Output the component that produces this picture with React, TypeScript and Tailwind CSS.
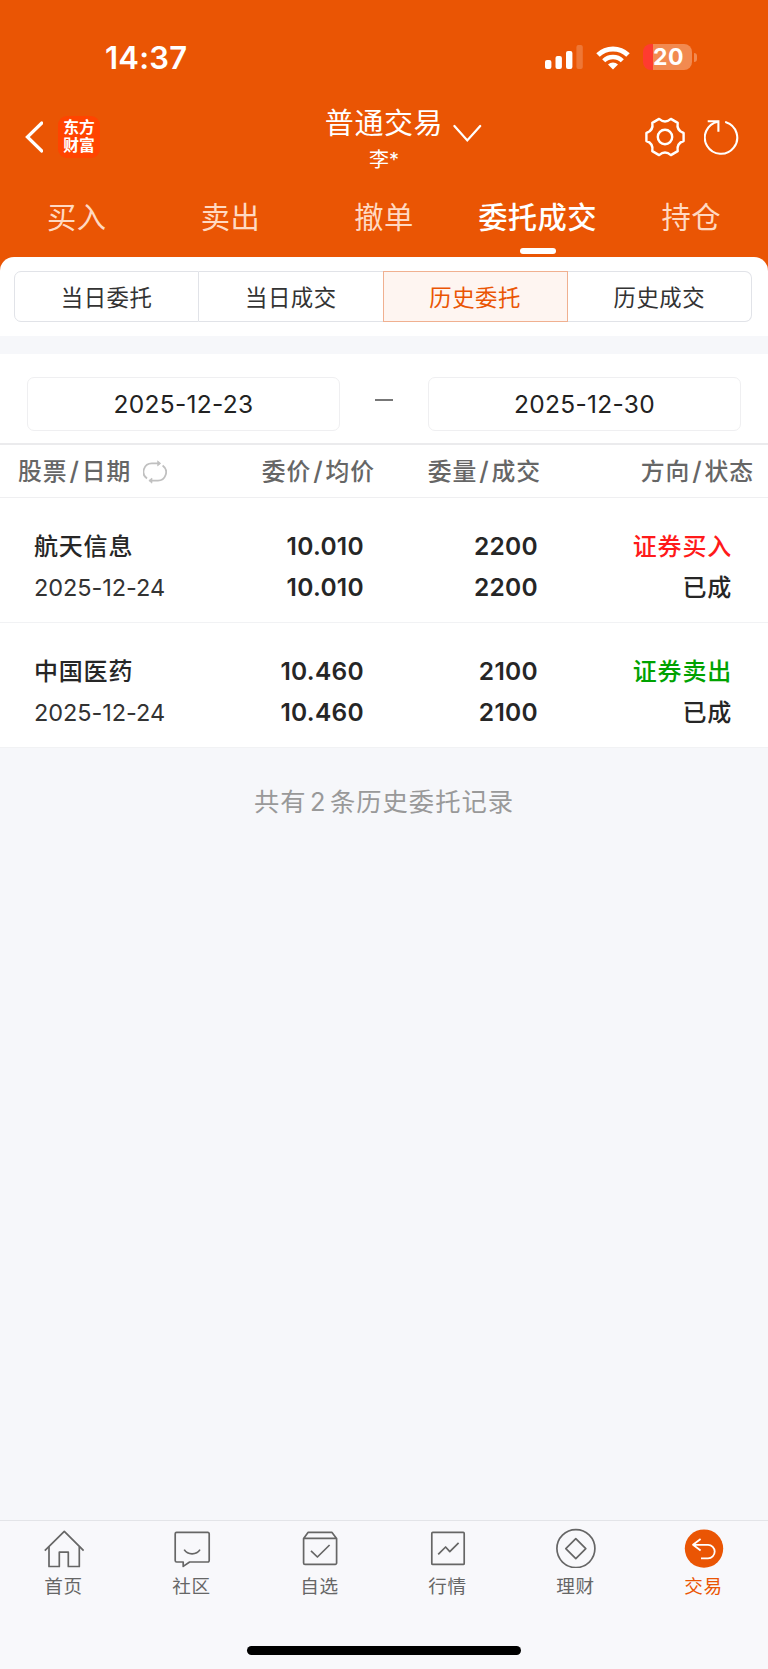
import clsx from 'clsx'
import type { ReactNode } from 'react'

type Order = {
  name: string
  date: string
  price: string
  avgPrice: string
  amount: string
  dealt: string
  direction: string
  side: 'buy' | 'sell'
  status: string
}

const tabs = ['买入', '卖出', '撤单', '委托成交', '持仓']
const segments = ['当日委托', '当日成交', '历史委托', '历史成交']

const orders: Order[] = [
  {
    name: '航天信息',
    date: '2025-12-24',
    price: '10.010',
    avgPrice: '10.010',
    amount: '2200',
    dealt: '2200',
    direction: '证券买入',
    side: 'buy',
    status: '已成'
  },
  {
    name: '中国医药',
    date: '2025-12-24',
    price: '10.460',
    avgPrice: '10.460',
    amount: '2100',
    dealt: '2100',
    direction: '证券卖出',
    side: 'sell',
    status: '已成'
  }
]

function StatusBar() {
  return (
    <div className="flex h-[98px] items-center justify-between pt-4 pr-[71px] pl-[105px]">
      <span className="text-[31px] leading-none font-semibold tracking-[0.2px]">14:37</span>
      <div className="flex items-center">
        <svg className="h-6 w-[38px]" viewBox="0 0 38 24" fill="currentColor">
          <rect x="0" y="15" width="6.4" height="9" rx="2" />
          <rect x="10.5" y="11" width="6.4" height="13" rx="2" />
          <rect x="21" y="6" width="6.4" height="18" rx="2" />
          <rect x="31.4" y="0" width="6.4" height="24" rx="2" opacity="0.2" />
        </svg>
        <svg className="ml-[13px] h-[25px] w-[34px]" viewBox="0 0 34 25" fill="none" stroke="currentColor">
          <path d="M2 10a21.6 21.6 0 0 1 30 0" strokeWidth="5" />
          <path d="M7.7 15.8a13.3 13.3 0 0 1 18.6 0" strokeWidth="4.4" />
          <path d="M12 19.6a7.2 7.2 0 0 1 10 0L17 24.6z" fill="currentColor" stroke="none" />
        </svg>
        <div className="ml-[13px] flex h-[26px] w-[49px] items-center justify-center rounded-[8px] bg-[linear-gradient(to_right,#ff3b30_10px,#f28a50_10px)] pl-[2px]">
          <span className="text-[23px] leading-[26px] font-bold tracking-[0.4px]">20</span>
        </div>
        <div className="ml-[2px] h-[9px] w-[3px] rounded-r-full bg-[#f28a50]" />
      </div>
    </div>
  )
}

function TitleBar() {
  return (
    <div className="grid h-[78px] grid-cols-[1fr_auto_1fr] items-center">
      <div className="flex items-center pl-[25px]">
        <svg className="h-8 w-[18px]" viewBox="0 0 18 32" fill="none" stroke="currentColor" strokeWidth="3.2">
          <path d="M16.8 2 2.4 16l14.4 14" strokeLinecap="round" />
        </svg>
        <div className="ml-[15px] flex h-[42px] w-[42px] flex-col items-center justify-center rounded-[9px] bg-[#ff4400] text-[15.8px] leading-[18px] font-bold">
          <span>东方</span>
          <span>财富</span>
        </div>
      </div>
      <div className="relative flex flex-col items-center pt-1">
        <span className="h-[39px] text-[29px] leading-[40px] tracking-[0.6px]">普通交易</span>
        <span className="h-[31px] text-[20px] leading-[34px]">李*</span>
        <svg
          className="absolute top-[24px] left-[127px] h-[20px] w-[30px]"
          viewBox="0 0 30 20"
          fill="none"
          stroke="currentColor"
          strokeWidth="2.3"
        >
          <path d="m2.4 2 12.9 14.4L28.2 2" strokeLinecap="round" />
        </svg>
      </div>
      <div className="flex items-center justify-end pr-[26px]">
        <svg className="h-10 w-10" viewBox="0 0 40 40" fill="none" stroke="currentColor" strokeWidth="2.4" strokeLinejoin="round">
          <path d="M38.6 16V24Q31.3 26.5 32.7 34.1L25.9 38.1Q20 33 14.1 38.1L7.3 34.1Q8.7 26.5 1.4 24V16Q8.7 13.5 7.3 5.9L14.1 1.9Q20 7 25.9 1.9L32.7 5.9Q31.3 13.5 38.6 16Z" />
          <circle cx="20" cy="20" r="7.2" />
        </svg>
        <svg className="ml-[19px] h-[38px] w-[38px]" viewBox="0 0 38 38" fill="none" stroke="currentColor" strokeWidth="2.1">
          <path d="M22 4.2A16.2 16.2 0 1 1 14 3.7" strokeLinecap="round" />
          <path d="M3.7 3.2H14.4V13.8" />
        </svg>
      </div>
    </div>
  )
}

function Tabs() {
  return (
    <div className="flex h-[81px]">
      {tabs.map(tab => {
        const isActive = tab === '委托成交'
        return (
          <div key={tab} className="relative flex flex-1 justify-center">
            <span
              className={clsx(
                'h-[84px] text-[29.3px] leading-[84px] tracking-[0.4px] whitespace-nowrap',
                isActive ? 'font-medium text-white' : 'text-[#ffd9c2]'
              )}
            >
              {tab}
            </span>
            {isActive && <div className="absolute bottom-[3px] h-[6px] w-9 rounded-[3px] bg-white" />}
          </div>
        )
      })}
    </div>
  )
}

function Segments() {
  return (
    <div className="h-[79px] rounded-t-[14px] bg-white px-[14px] pt-[14px]">
      <div className="flex h-[51px] w-[738px]">
        {segments.map((label, i) => (
          <div
            key={label}
            className={clsx(
              'flex flex-1 items-center justify-center border pt-[2px] text-[22.4px] tracking-[0.6px]',
              label === '历史委托'
                ? 'border-[#f0b090] bg-[#fef5f1] text-[#ea5504]'
                : 'border-[#e1e3e8] text-[#333]',
              i === 0 && 'rounded-l-[7px]',
              i === 1 && 'border-r-0 border-l-0',
              i === 3 && 'rounded-r-[7px] border-l-0'
            )}
          >
            {label}
          </div>
        ))}
      </div>
    </div>
  )
}

function DateBox({ value }: { value: string }) {
  return (
    <div className="flex h-[54px] w-[313px] items-center justify-center rounded-[7px] border border-[#efeff1] text-[24.5px] tracking-[0.3px] text-[#222]">
      {value}
    </div>
  )
}

function SwapIcon() {
  return (
    <svg className="h-6 w-6" viewBox="0 0 24 24" fill="none" stroke="#c0c0c0" strokeWidth="1.8">
      <path d="M4 18.6A8.4 8.4 0 0 1 9.4 3.4H17" />
      <path d="M19.6 5.4A8.4 8.4 0 0 1 14.2 20.6H6.6" />
      <path d="m14.6.8 3.2 2.6-3.2 2.6zM9 18l-3.2 2.6L9 23.2z" fill="#c0c0c0" strokeWidth="0.6" />
    </svg>
  )
}

function Slash() {
  return <span className="px-[2px] text-[25.5px] leading-none">/</span>
}

function TableHead() {
  return (
    <div className="flex h-[53px] items-center border-b border-[#efeff1] pt-[1px] pr-[14px] pl-[18px] text-[23.8px] font-medium tracking-[0.9px] text-[#666]">
      <div className="flex w-[190px] items-center">
        <span>股票<Slash />日期</span>
        <span className="ml-3"><SwapIcon /></span>
      </div>
      <div className="w-[167px] text-right">委价<Slash />均价</div>
      <div className="w-[166px] text-right">委量<Slash />成交</div>
      <div className="flex-1 text-right">方向<Slash />状态</div>
    </div>
  )
}

function OrderRow({ order }: { order: Order }) {
  return (
    <div className="flex h-[125px] border-b border-[#f1f2f4] pt-[28px] pr-[36px] pl-[34px] text-[24.5px] leading-[41px] font-semibold tracking-[0.3px] text-[#262626]">
      <div className="w-[170px]">
        <div className="font-medium text-[24px] tracking-[0.8px]">{order.name}</div>
        <div className="text-[23.5px] font-normal tracking-[-0.05px] text-[#333]">{order.date}</div>
      </div>
      <div className="w-[160px] text-right">
        <div>{order.price}</div>
        <div>{order.avgPrice}</div>
      </div>
      <div className="w-[174px] text-right">
        <div>{order.amount}</div>
        <div>{order.dealt}</div>
      </div>
      <div className="flex-1 text-right text-[24px] font-medium tracking-[0.8px]">
        <div className={order.side === 'buy' ? 'text-[#ff1a1a]' : 'text-[#00a200]'}>{order.direction}</div>
        <div>{order.status}</div>
      </div>
    </div>
  )
}

function NavItem({ label, active, children }: { label: string; active?: boolean; children: ReactNode }) {
  return (
    <div
      className={clsx(
        'flex flex-1 flex-col items-center pt-[7px] text-[18.6px] leading-[36px] tracking-[0.6px]',
        active ? 'text-[#ea5504]' : 'text-[#666]'
      )}
    >
      <svg className="h-10 w-10" viewBox="0 0 40 40" fill="none" stroke="currentColor" strokeWidth="1.7" strokeLinejoin="round">
        {children}
      </svg>
      <span className="mr-[1px]">{label}</span>
    </div>
  )
}

function BottomNav() {
  return (
    <div className="flex h-[149px] flex-col border-t border-[#e3e4e8] bg-[#f8f8fb]">
      <div className="flex flex-1">
        <NavItem label="首页">
          <path d="M.8 22.6 20.3 3.4l19.3 19.2" />
          <path d="M5 18.8v19.7h10.3V24.2h9v14.3h11V18.8" />
        </NavItem>
        <NavItem label="社区">
          <path d="M4.6 4.4h31.2a1.4 1.4 0 0 1 1.4 1.4v26.8a1.4 1.4 0 0 1-1.4 1.4H17.6l-6.4 4.4V34H4.6a1.4 1.4 0 0 1-1.4-1.4V5.8a1.4 1.4 0 0 1 1.4-1.4z" />
          <path d="M12.2 21.6c3.6 5.6 12.2 5.6 15.8 0" />
        </NavItem>
        <NavItem label="自选">
          <path d="M3.6 10.4 8 4.4h24l4.6 6v24.6a1.4 1.4 0 0 1-1.4 1.4H5a1.4 1.4 0 0 1-1.4-1.4zM3.6 10.4h33" />
          <path d="m11 22.8 6.4 6.2L29.6 17" />
        </NavItem>
        <NavItem label="行情">
          <rect x="3.8" y="4.4" width="32.4" height="32" rx="1" />
          <path d="m10.2 26.4 7.4-7.4 4.2 4.6 8.8-8.8" />
        </NavItem>
        <NavItem label="理财">
          <circle cx="19.9" cy="20.6" r="19" />
          <path d="m19.8 10.6 10 10-10 10-10-10z" />
        </NavItem>
        <NavItem label="交易" active>
          <circle cx="20" cy="20.6" r="19.2" fill="currentColor" stroke="none" />
          <path d="M16.6 11 9 16.7l7.6 5.8M9 16.9h15a6.7 6.7 0 0 1 0 13.4h-7" stroke="#fff" strokeWidth="1.8" />
        </NavItem>
      </div>
      <div className="mx-auto mb-[14px] h-[9px] w-[274px] rounded-full bg-black" />
    </div>
  )
}

export default function App() {
  return (
    <div className="flex h-[1669px] w-[768px] flex-col bg-[#f6f7fa] font-['Inter','Noto_Sans_CJK_SC',sans-serif]">
      <header className="bg-[#ea5504] text-white">
        <StatusBar />
        <TitleBar />
        <Tabs />
        <Segments />
      </header>

      <main className="mt-[18px] flex-1">
        <section className="bg-white">
          <div className="flex h-[91px] items-start justify-between border-b-2 border-[#ebebed] px-[27px] pt-[23px]">
            <DateBox value="2025-12-23" />
            <div className="mt-[22px] h-[2px] w-[18px] bg-[#777]" />
            <DateBox value="2025-12-30" />
          </div>
          <TableHead />
          {orders.map(order => (
            <OrderRow key={order.name} order={order} />
          ))}
        </section>
        <p className="mt-[35px] text-center text-[25.3px] leading-[38px] tracking-[1px] text-[#999]">
          共有<span className="px-[3.5px]">2</span>条历史委托记录
        </p>
      </main>

      <BottomNav />
    </div>
  )
}
